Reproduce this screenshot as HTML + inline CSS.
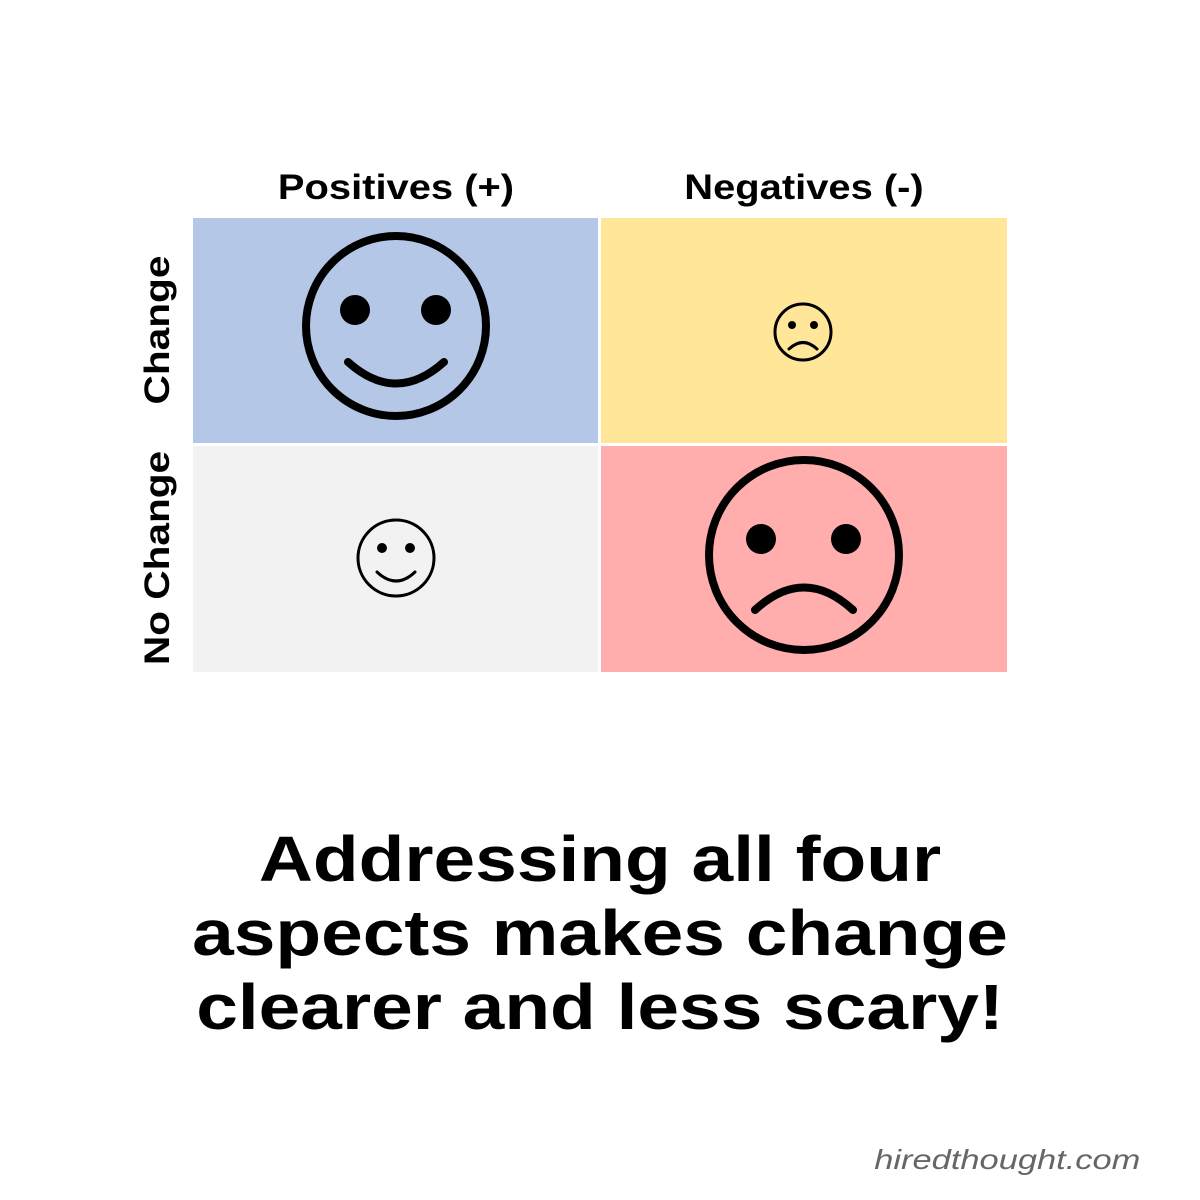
<!DOCTYPE html>
<html><head><style>
body{margin:0;width:1200px;height:1200px;background:#fff;position:relative;overflow:hidden;font-family:"Liberation Sans",sans-serif;}
.q{position:absolute;}
.h{position:absolute;top:168px;font-weight:bold;font-size:35px;text-align:center;width:406px;color:#000;transform:scaleX(1.14);}
.v{position:absolute;font-weight:bold;font-size:35px;transform:rotate(-90deg) scaleX(1.16);transform-origin:center;white-space:nowrap;text-align:center;width:300px;color:#000;}
.main{position:absolute;top:822px;left:0;width:1200px;text-align:center;font-weight:bold;font-size:64px;line-height:74px;color:#000;}
.main div{transform:scaleX(1.17);}
.wm{position:absolute;right:60px;top:1144px;font-style:italic;font-size:28px;color:#666;transform:scaleX(1.23);transform-origin:right center;}
</style></head><body>
<div class="q" style="left:193px;top:218px;width:405px;height:225px;background:#b4c7e7"></div>
<div class="q" style="left:601px;top:218px;width:406px;height:225px;background:#ffe699"></div>
<div class="q" style="left:193px;top:446px;width:405px;height:226px;background:#f2f2f2"></div>
<div class="q" style="left:601px;top:446px;width:406px;height:226px;background:#ffadad"></div>
<div class="h" style="left:193px">Positives (+)</div>
<div class="h" style="left:601px">Negatives (-)</div>
<div class="v" style="left:8px;top:310px">Change</div>
<div class="v" style="left:8px;top:538px">No Change</div>
<svg width="1200" height="1200" style="position:absolute;left:0;top:0" fill="none" stroke="#000" stroke-linecap="round">
<circle cx="396" cy="326" r="90" stroke-width="8"/>
<circle cx="355" cy="310" r="15" fill="#000" stroke="none"/>
<circle cx="436" cy="310" r="15" fill="#000" stroke="none"/>
<path d="M348 362 Q396 405 444 362" stroke-width="8"/>
<circle cx="803" cy="332" r="28" stroke-width="3"/>
<circle cx="792" cy="325" r="4" fill="#000" stroke="none"/>
<circle cx="814" cy="325" r="4" fill="#000" stroke="none"/>
<path d="M789 349 Q803 336 817 349" stroke-width="3"/>
<circle cx="396" cy="558" r="38" stroke-width="3"/>
<circle cx="382" cy="548" r="5" fill="#000" stroke="none"/>
<circle cx="410" cy="548" r="5" fill="#000" stroke="none"/>
<path d="M377 572 Q396 590 415 572" stroke-width="3"/>
<circle cx="804" cy="555" r="95" stroke-width="8"/>
<circle cx="761" cy="539" r="15" fill="#000" stroke="none"/>
<circle cx="846" cy="539" r="15" fill="#000" stroke="none"/>
<path d="M755 610 Q804 565 853 610" stroke-width="8"/>
</svg>
<div class="main"><div>Addressing all four</div><div>aspects makes change</div><div>clearer and less scary!</div></div>
<div class="wm">hiredthought.com</div>
</body></html>
